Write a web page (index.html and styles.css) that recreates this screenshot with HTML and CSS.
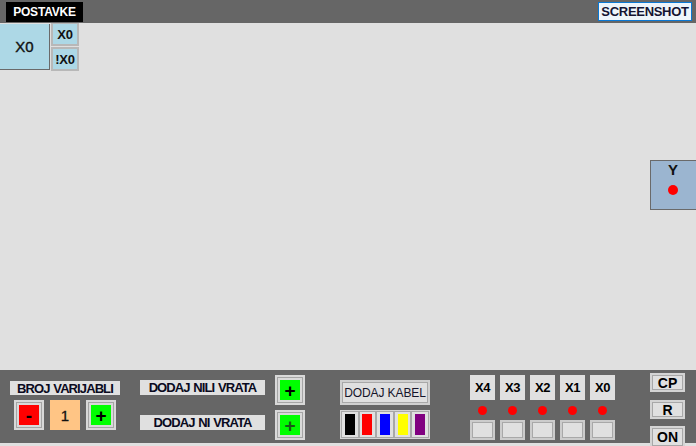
FILE: index.html
```html
<!DOCTYPE html>
<html>
<head>
<meta charset="utf-8">
<link rel="stylesheet" href="styles.css">
</head>
<body>
<div class="app">
  <header class="topbar">
    <div class="postavke">POSTAVKE</div>
    <button class="screenshot">SCREENSHOT</button>
  </header>
  <main class="canvas">
    <div class="node input-node">X0</div>
    <div class="node mini-node mini-a">X0</div>
    <div class="node mini-node mini-b">!X0</div>
    <div class="node output-node"><span class="out-label">Y</span><span class="dot out-dot"></span></div>
  </main>
  <footer class="panel">
    <section class="col col-vars">
      <div class="label label-vars">BROJ VARIJABLI</div>
      <div class="var-row">
        <div class="btn3d red">-</div>
        <div class="count">1</div>
        <div class="btn3d green">+</div>
      </div>
    </section>
    <section class="col col-gates">
      <div class="gate-row">
        <div class="label label-gate">DODAJ NILI VRATA</div>
        <div class="btn3d green">+</div>
      </div>
      <div class="gate-row">
        <div class="label label-gate">DODAJ NI VRATA</div>
        <div class="btn3d green plus-dim">+</div>
      </div>
    </section>
    <section class="col col-cable">
      <div class="cable-btn">DODAJ KABEL</div>
      <div class="swatches">
        <div class="swatch"><span class="sw black"></span></div>
        <div class="swatch"><span class="sw red"></span></div>
        <div class="swatch"><span class="sw blue"></span></div>
        <div class="swatch"><span class="sw yellow"></span></div>
        <div class="swatch"><span class="sw purple"></span></div>
      </div>
    </section>
    <section class="col col-inputs">
      <div class="in-row">
        <div class="in-btn">X4</div>
        <div class="in-btn">X3</div>
        <div class="in-btn">X2</div>
        <div class="in-btn">X1</div>
        <div class="in-btn">X0</div>
      </div>
      <div class="in-row dots-row">
        <div class="dot-cell"><span class="dot"></span></div>
        <div class="dot-cell"><span class="dot"></span></div>
        <div class="dot-cell"><span class="dot"></span></div>
        <div class="dot-cell"><span class="dot"></span></div>
        <div class="dot-cell"><span class="dot"></span></div>
      </div>
      <div class="in-row">
        <div class="in-box"></div>
        <div class="in-box"></div>
        <div class="in-box"></div>
        <div class="in-box"></div>
        <div class="in-box"></div>
      </div>
    </section>
    <section class="col col-ctrl">
      <div class="ctrl-btn">CP</div>
      <div class="ctrl-btn">R</div>
      <div class="ctrl-btn ctrl-on">ON</div>
    </section>
  </footer>
</div>
</body>
</html>
```
FILE: styles.css
```css
* { box-sizing: border-box; }
html, body {
  margin: 0;
  padding: 0;
  width: 696px;
  height: 446px;
  overflow: hidden;
  background: #e0e0e0;
  font-family: "Liberation Sans", Arial, sans-serif;
}
.app {
  display: flex;
  flex-direction: column;
  height: 446px;
}
.topbar {
  height: 23px;
  background: #666666;
  display: flex;
  justify-content: space-between;
  align-items: flex-start;
  padding: 2px 4px 0 6px;
  position: relative;
  z-index: 2;
}
.postavke {
  width: 77px;
  height: 20px;
  background: #000;
  color: #fff;
  font-weight: bold;
  font-size: 12px;
  display: flex;
  align-items: center;
  justify-content: center;
  letter-spacing: -0.2px;
}
.screenshot {
  width: 94px;
  height: 19px;
  background: #eef5fb;
  border: 1px solid #0a78d4;
  color: #141432;
  font-family: "Liberation Sans", Arial, sans-serif;
  font-weight: bold;
  font-size: 13px;
  padding: 0;
  margin: 0;
  letter-spacing: -0.3px;
}
.canvas {
  flex: 1;
  position: relative;
  background: #e0e0e0;
}
.node {
  position: absolute;
  display: flex;
  align-items: center;
  justify-content: center;
  font-weight: bold;
  color: #111;
}
.input-node {
  left: 0;
  top: 1px;
  width: 50px;
  height: 46px;
  background: #add8e6;
  border-right: 1px solid #6a6a6a;
  border-bottom: 1px solid #6a6a6a;
  font-size: 15px;
  font-weight: normal;
  -webkit-text-stroke: 0.4px #111;
}
.mini-node {
  left: 51px;
  width: 28px;
  height: 24px;
  background: #add8e6;
  border: 2px solid #b8b8b8;
  font-size: 13px;
  letter-spacing: -0.3px;
}
.mini-a { top: -1px; }
.mini-b { top: 24px; }
.output-node {
  left: 650px;
  top: 137px;
  width: 50px;
  height: 50px;
  background: #9bb5d0;
  border: 1px solid #6a6a6a;
  flex-direction: column;
  justify-content: flex-start;
  font-size: 15px;
}
.out-label {
  margin-left: -4px;
  line-height: 16px;
  margin-top: 1px;
}
.dot {
  display: block;
  width: 10px;
  height: 10px;
  border-radius: 50%;
  background: #ff0000;
}
.out-dot {
  margin-top: 7px;
  margin-left: -4px;
}
.panel {
  height: 73px;
  background: #666666;
  display: flex;
  align-items: flex-start;
  margin-bottom: 3px;
  position: relative;
}
.col { display: flex; flex-direction: column; }
.label {
  background: #e0e0e0;
  color: #0a0a20;
  font-weight: bold;
  font-size: 13px;
  display: flex;
  align-items: center;
  justify-content: center;
  letter-spacing: -0.9px;
  word-spacing: 1px;
}
.col-vars {
  margin-left: 10px;
  padding-top: 11px;
  width: 110px;
}
.label-vars { height: 14px; width: 110px; }
.var-row {
  display: flex;
  gap: 6px;
  margin-top: 5px;
  padding-left: 4px;
}
.btn3d {
  width: 30px;
  height: 30px;
  border: 2px solid #d8d8d8;
  box-shadow: inset 0 0 0 1px #a4a4a4, inset 0 0 0 3px #d8d8d8;
  display: flex;
  align-items: center;
  justify-content: center;
  font-weight: bold;
  font-size: 19px;
  color: #000;
  line-height: 1;
}
.btn3d.red { background: #ff0000; }
.btn3d.green { background: #00ff00; }
.plus-dim { color: #1a5a1a; }
.count {
  width: 30px;
  height: 30px;
  background: #ffc585;
  display: flex;
  align-items: center;
  justify-content: center;
  font-size: 15px;
  color: #111;
  -webkit-text-stroke: 0.3px #111;
}
.col-gates {
  margin-left: 20px;
  padding-top: 5px;
  gap: 5px;
}
.gate-row {
  display: flex;
  align-items: center;
  gap: 10px;
}
.label-gate {
  width: 125px;
  height: 15px;
  margin-top: -5px;
}
.col-cable {
  margin-left: 35px;
  padding-top: 10px;
  width: 90px;
}
.cable-btn {
  height: 25px;
  background: #e0e0e0;
  border: 2px solid #d0d0d0;
  box-shadow: inset 0 0 0 1px #a8a8a8;
  display: flex;
  align-items: center;
  justify-content: center;
  font-size: 12px;
  color: #15152a;
  letter-spacing: -0.1px;
}
.swatches {
  margin-top: 5px;
  height: 29px;
  display: flex;
  background: #d4d4d4;
  padding: 1px;
}
.swatch {
  width: 17.6px;
  height: 27px;
  border: 1px solid #a8a8a8;
  background: #e0e0e0;
  display: flex;
  align-items: center;
  justify-content: center;
  padding: 2px;
}
.sw { display: block; width: 10px; height: 21px; }
.sw.black { background: #000; }
.sw.red { background: #ff0000; }
.sw.blue { background: #0000ff; }
.sw.yellow { background: #ffff00; }
.sw.purple { background: #800080; }
.col-inputs {
  margin-left: 40px;
  padding-top: 5px;
  width: 145px;
}
.in-row { display: flex; gap: 5px; }
.in-btn {
  width: 25px;
  height: 25px;
  background: #e0e0e0;
  display: flex;
  align-items: center;
  justify-content: center;
  font-weight: bold;
  font-size: 13px;
  color: #000;
  letter-spacing: -0.5px;
}
.dots-row { margin-top: 5px; height: 10px; }
.dot-cell {
  width: 25px;
  display: flex;
  justify-content: center;
}
.dot-cell .dot { width: 9px; height: 9px; margin-top: 1px; }
.dots-row + .in-row { margin-top: 5px; }
.in-box {
  width: 25px;
  height: 20px;
  background: #e0e0e0;
  border: 2px solid #cccccc;
  box-shadow: inset 0 0 0 1px #a8a8a8;
}
.col-ctrl {
  margin-left: 35px;
  padding-top: 3px;
  gap: 8px;
}
.ctrl-btn {
  width: 35px;
  height: 19px;
  background: #e0e0e0;
  border: 2px solid #d4d4d4;
  box-shadow: inset 0 0 0 1px #a8a8a8;
  display: flex;
  align-items: center;
  justify-content: center;
  font-weight: bold;
  font-size: 14px;
  color: #000;
}
.ctrl-on { height: 22px; margin-top: -1px; }
```
